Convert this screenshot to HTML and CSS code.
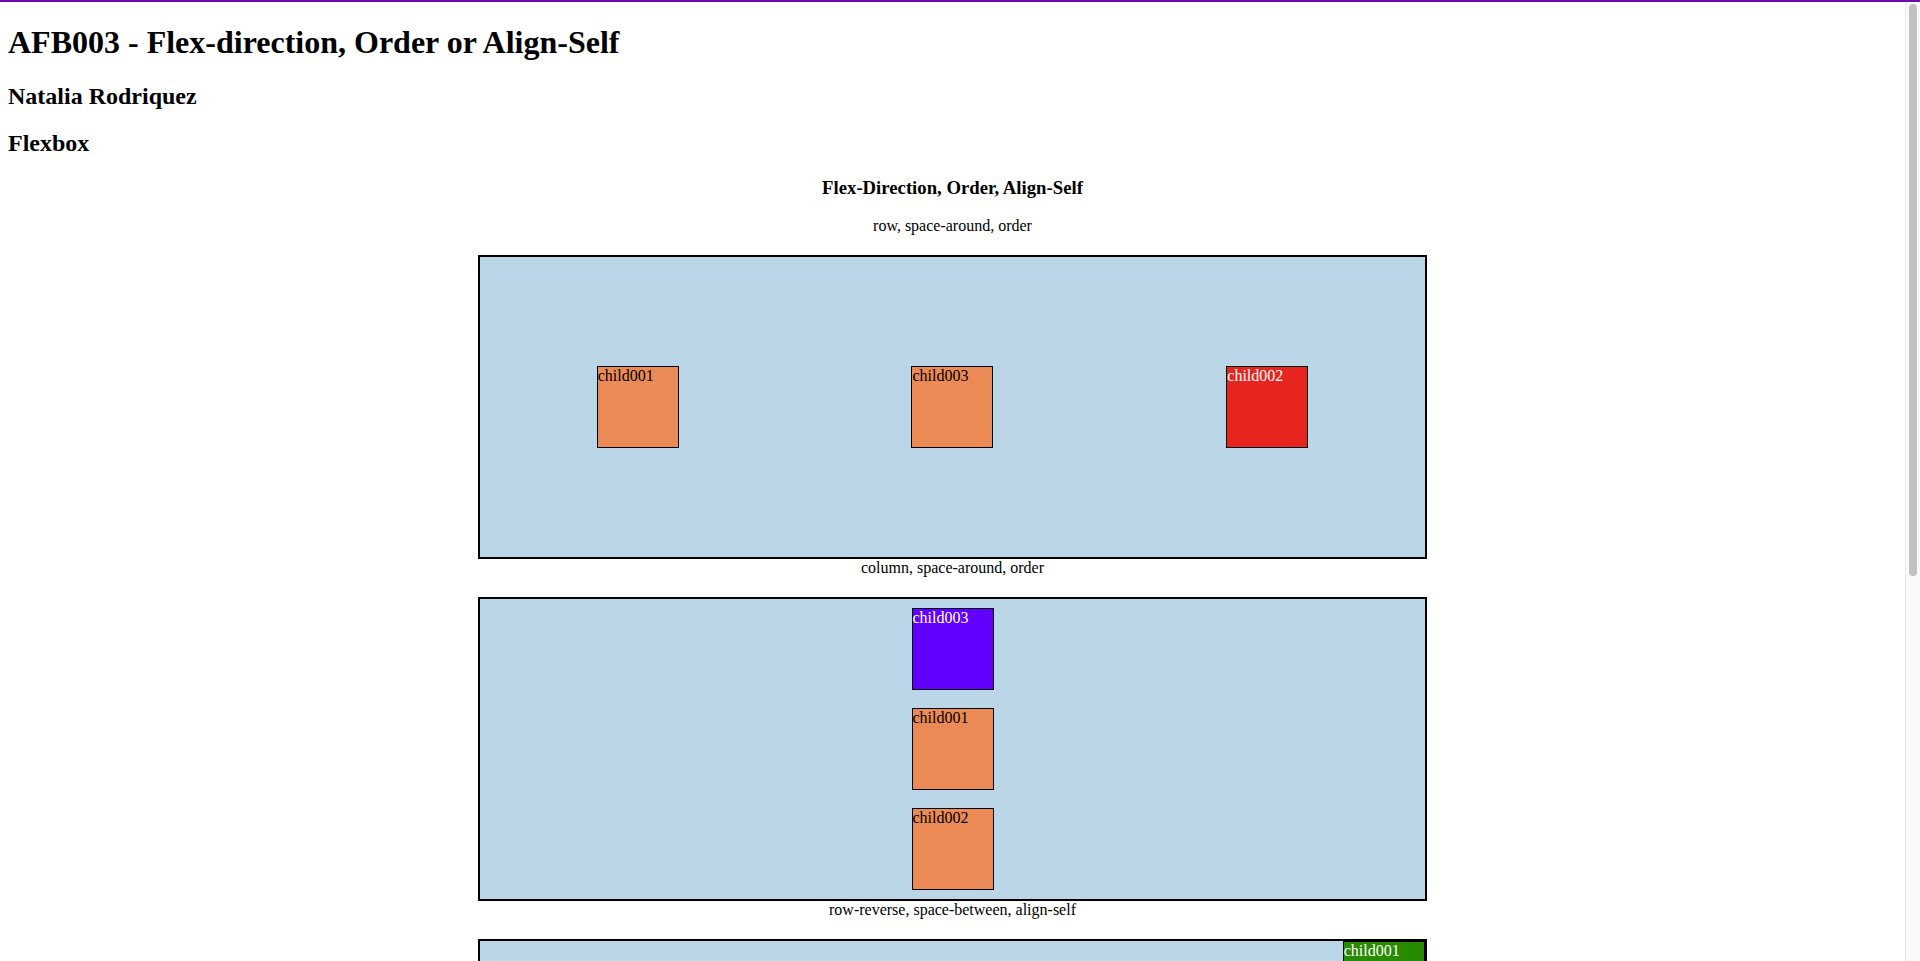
FILE: index.html
```html
<!DOCTYPE html>
<html lang="en">
<head>
<meta charset="utf-8">
<title>AFB003 - Flex-direction, Order or Align-Self</title>
<link rel="stylesheet" href="styles.css">
</head>
<body>
<div class="page">
  <div class="content">
    <h1>AFB003 - Flex-direction, Order or Align-Self</h1>
    <h2>Natalia Rodriquez</h2>
    <h2>Flexbox</h2>
    <h3 class="title">Flex-Direction, Order, Align-Self</h3>

    <p class="label">row, space-around, order</p>
    <div class="box row-around">
      <div class="child orange ord1">child001</div>
      <div class="child red ord3">child002</div>
      <div class="child orange ord2">child003</div>
    </div>

    <p class="label">column, space-around, order</p>
    <div class="box column-around">
      <div class="child orange ord2">child001</div>
      <div class="child orange ord3">child002</div>
      <div class="child purple ord1">child003</div>
    </div>

    <p class="label">row-reverse, space-between, align-self</p>
    <div class="box row-reverse-between">
      <div class="child green self-start">child001</div>
      <div class="child orange self-center">child002</div>
      <div class="child orange self-end">child003</div>
    </div>

    <p class="label">column-reverse, space-between, align-self</p>
    <div class="box column-reverse-between">
      <div class="child orange self-start">child001</div>
      <div class="child orange self-center">child002</div>
      <div class="child orange self-end">child003</div>
    </div>
  </div>
</div>
<div class="scrollbar" aria-hidden="true">
  <div class="thumb"></div>
</div>
</body>
</html>
```
FILE: styles.css
```css
html {
  height: 100%;
  overflow: hidden;
  border-top: 2px solid #6a0dad;
  box-sizing: border-box;
}
body {
  margin: 0;
  height: 100%;
  display: flex;
  font-family: "Liberation Serif", "Times New Roman", serif;
  color: #000;
  background: #fff;
}
.page {
  flex: 1;
  min-width: 0;
  overflow: hidden;
  padding-top: 1px;
}
.scrollbar {
  flex: none;
  width: 15px;
  box-sizing: border-box;
  background: #fafafa;
  border-left: 1px solid #e8e8e8;
  padding: 2px 3px 0 3px;
}
.thumb {
  height: 572px;
  background: #c1c1c1;
  border-radius: 4px;
}
.content {
  margin: 8px;
}
h1 {
  font-size: 32px;
  margin: 21.44px 0;
}
h2 {
  font-size: 24px;
  margin: 19.92px 0;
}
.title {
  font-size: 18.72px;
  margin: 18.72px 0;
  text-align: center;
}
.label {
  margin: 0;
  font-size: 16px;
  text-align: center;
}
.box {
  width: 50%;
  height: 300px;
  margin: 20px auto 0;
  border: 2px solid #000;
  background: #bbd6e7;
  display: flex;
}
.row-around {
  flex-direction: row;
  justify-content: space-around;
  align-items: center;
}
.column-around {
  flex-direction: column;
  justify-content: space-around;
  align-items: center;
}
.row-reverse-between {
  flex-direction: row-reverse;
  justify-content: space-between;
  align-items: center;
}
.column-reverse-between {
  flex-direction: column-reverse;
  justify-content: space-between;
  align-items: center;
}
.child {
  width: 80px;
  height: 80px;
  border: 1px solid #000;
  font-size: 16px;
  line-height: normal;
}
.orange {
  background: #eb8a55;
  color: #000;
}
.red {
  background: #e8241e;
  color: #fff;
}
.purple {
  background: #6200ff;
  color: #fff;
}
.green {
  background: #288a00;
  color: #fff;
}
.ord1 { order: 1; }
.ord2 { order: 2; }
.ord3 { order: 3; }
.self-start { align-self: flex-start; }
.self-center { align-self: center; }
.self-end { align-self: flex-end; }
```
